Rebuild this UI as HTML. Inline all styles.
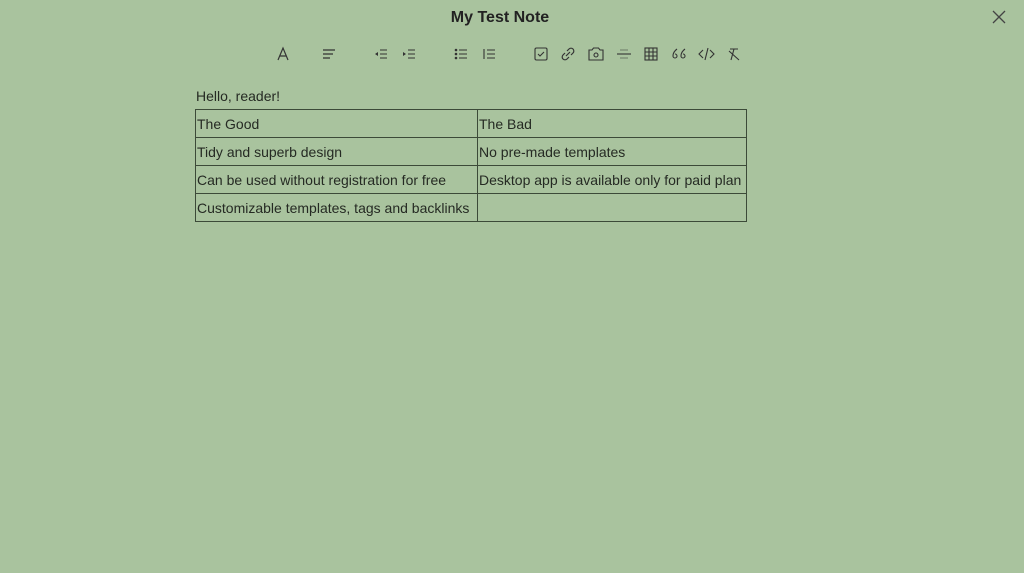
<!DOCTYPE html>
<html><head><style>
body{margin:0;width:1024px;height:573px;background:#a9c39e;font-family:"Liberation Sans",sans-serif;color:#252a23;position:relative;overflow:hidden}
.t{position:absolute;top:9px;left:0;width:1000px;text-align:center;font-weight:bold;font-size:16px;color:#222}
.x{position:absolute;left:992px;top:10px}
.tb{position:absolute;top:45px;left:0}
.tb svg{position:absolute}
.h{position:absolute;left:196px;top:88px;font-size:14px}
table{position:absolute;left:195px;top:109px;border-collapse:collapse;font-size:14px}
td{border:1px solid #3c4a38;height:27px;padding:0 1px;vertical-align:middle;white-space:nowrap}
</style></head><body>
<div class="t">My Test Note</div>
<svg class="x" width="14" height="14" viewBox="0 0 14 14"><path d="M1 1L13 13M13 1L1 13" stroke="#444" stroke-width="1.3"/></svg>
<div class="tb">
<svg style="left:276px" width="14" height="18" viewBox="0 0 14 18"><path d="M2 15L7 3L12 15M4 11H10" stroke="#333" fill="none" stroke-width="1.2"/></svg>
<svg style="left:322px" width="14" height="18" viewBox="0 0 14 18"><path d="M1 5H13M1 9H11M1 13H8" stroke="#333" stroke-width="1.2"/></svg>
<svg style="left:374px" width="14" height="18" viewBox="0 0 14 18"><path d="M1 9L4 7V11Z" fill="#333"/><path d="M6 5H13M6 9H13M6 13H13" stroke="#333" stroke-width="1.1"/></svg>
<svg style="left:402px" width="14" height="18" viewBox="0 0 14 18"><path d="M4 9L1 7V11Z" fill="#333"/><path d="M6 5H13M6 9H13M6 13H13" stroke="#333" stroke-width="1.1"/></svg>
<svg style="left:454px" width="14" height="18" viewBox="0 0 14 18"><circle cx="2" cy="5" r="1.3" fill="#333"/><circle cx="2" cy="9" r="1.3" fill="#333"/><circle cx="2" cy="13" r="1.3" fill="#333"/><path d="M5 5H13M5 9H13M5 13H13" stroke="#333" stroke-width="1.1"/></svg>
<svg style="left:482px" width="14" height="18" viewBox="0 0 14 18"><path d="M2 4V14M5 5H13M5 9H13M5 13H13" stroke="#333" stroke-width="1.1"/></svg>
<svg style="left:534px" width="14" height="18" viewBox="0 0 14 18"><rect x="1" y="3" width="12" height="12" rx="1.5" stroke="#333" fill="none" stroke-width="1.1"/><path d="M4 9L6 11L10 7" stroke="#333" fill="none" stroke-width="1.1"/></svg>
<svg style="left:561px" width="14" height="18" viewBox="0 0 14 18"><path d="M6 6L8 4A2.5 2.5 0 0 1 12 8L10 10M8 12L6 14A2.5 2.5 0 0 1 2 10L4 8M5 11L9 7" stroke="#333" fill="none" stroke-width="1.2"/></svg>
<svg style="left:588px" width="16" height="18" viewBox="0 0 16 18"><path d="M1 5H4L5.5 3H10.5L12 5H15V15H1Z" stroke="#333" fill="none" stroke-width="1.1"/><circle cx="8" cy="10" r="2" stroke="#333" fill="none" stroke-width="1.1"/></svg>
<svg style="left:616px" width="16" height="18" viewBox="0 0 16 18"><path d="M1 9H15" stroke="#333" stroke-width="1.1"/><path d="M4 5H12M4 13H12" stroke="#6b7a66" stroke-width="1.1"/></svg>
<svg style="left:644px" width="14" height="18" viewBox="0 0 14 18"><rect x="1" y="3" width="12" height="12" stroke="#333" fill="none" stroke-width="1.1"/><path d="M1 7H13M1 11H13M5 3V15M9 3V15" stroke="#333" stroke-width="1.1"/></svg>
<svg style="left:671px" width="16" height="18" viewBox="0 0 16 18"><path d="M6 4Q2 7 2 11A2 2 0 1 0 4 9M14 4Q10 7 10 11A2 2 0 1 0 12 9" stroke="#333" fill="none" stroke-width="1.1"/></svg>
<svg style="left:698px" width="17" height="18" viewBox="0 0 17 18"><path d="M5 5L1 9L5 13M12 5L16 9L12 13M10 3L7 15" stroke="#333" fill="none" stroke-width="1.1"/></svg>
<svg style="left:727px" width="14" height="18" viewBox="0 0 14 18"><path d="M3 4H11M7 4L4 15M2 6L12 15" stroke="#333" fill="none" stroke-width="1.1"/></svg>
</div>
<div class="h">Hello, reader!</div>
<table>
<tr><td style="width:279px">The Good</td><td style="width:266px">The Bad</td></tr>
<tr><td>Tidy and superb design</td><td>No pre-made templates</td></tr>
<tr><td>Can be used without registration for free</td><td>Desktop app is available only for paid plan</td></tr>
<tr><td>Customizable templates, tags and backlinks</td><td></td></tr>
</table>
</body></html>
